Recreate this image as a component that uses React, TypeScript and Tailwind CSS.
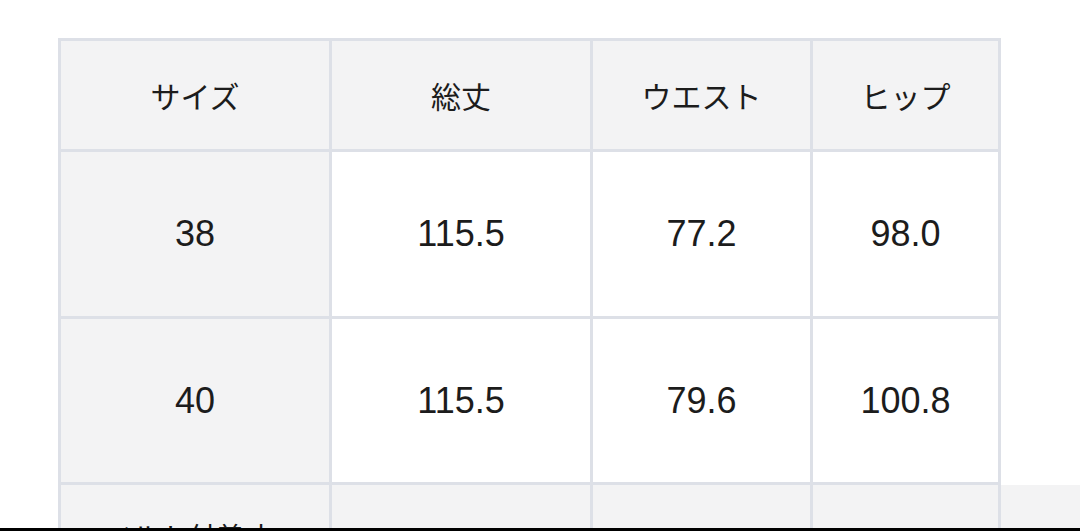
const headers = ["サイズ", "総丈", "ウエスト", "ヒップ"];

const rows = [
  ["38", "115.5", "77.2", "98.0"],
  ["40", "115.5", "79.6", "100.8"],
];

const widths = ["w-[271px]", "w-[261px]", "w-[220px]", "w-[188px]"];

const jp = { fontFamily: '"Noto Sans CJK JP", "Noto Sans", sans-serif' };
const num = { fontFamily: '"Liberation Sans", Arial, sans-serif' };

export default function App() {
  return (
    <div className="h-[531px] w-[1080px] flex flex-col bg-white overflow-hidden">
      <div className="flex-1 overflow-hidden pt-[38px] pl-[58px]">
        <div className="w-[943px] border-l-[3px] border-t-[3px] border-[#dde0e7] text-[#1c1c1c]">
          {/* Header */}
          <div className="flex h-[111px]">
            {headers.map((h, i) => (
              <div
                key={h}
                className={`${widths[i]} shrink-0 flex items-center justify-center bg-[#f3f3f4] border-r-[3px] border-b-[3px] border-[#dde0e7] text-[30px]`}
                style={jp}
              >
                {h}
              </div>
            ))}
          </div>

          {rows.map((r, ri) => (
            <div key={ri} className={`flex ${ri === 0 ? "h-[167px]" : "h-[166px]"}`}>
              {r.map((v, i) => (
                <div
                  key={i}
                  className={`${widths[i]} shrink-0 flex items-center justify-center border-r-[3px] border-b-[3px] border-[#dde0e7] text-[36px] ${i === 0 ? "bg-[#f3f3f4]" : "bg-white"}`}
                  style={num}
                >
                  {v}
                </div>
              ))}
            </div>
          ))}

          {/* Last row, cut off by the bottom edge */}
          <div className="flex h-[80px]">
            <div
              className="w-[271px] shrink-0 bg-[#f3f3f4] border-r-[3px] border-[#dde0e7] pt-[30px] pr-[14px] text-center text-[28px]"
              style={jp}
            >
              ベルト付着丈
            </div>
            <div className="w-[261px] shrink-0 bg-[#f3f3f4] border-r-[3px] border-[#dde0e7]" />
            <div className="w-[220px] shrink-0 bg-[#f3f3f4] border-r-[3px] border-[#dde0e7]" />
            <div className="w-[188px] shrink-0 bg-[#f3f3f4] border-r-[3px] border-[#dde0e7]" />
            <div className="w-[200px] shrink-0 bg-[#f3f3f4]" />
          </div>
        </div>
      </div>
      <div className="h-[3px] bg-black shrink-0" />
    </div>
  );
}
